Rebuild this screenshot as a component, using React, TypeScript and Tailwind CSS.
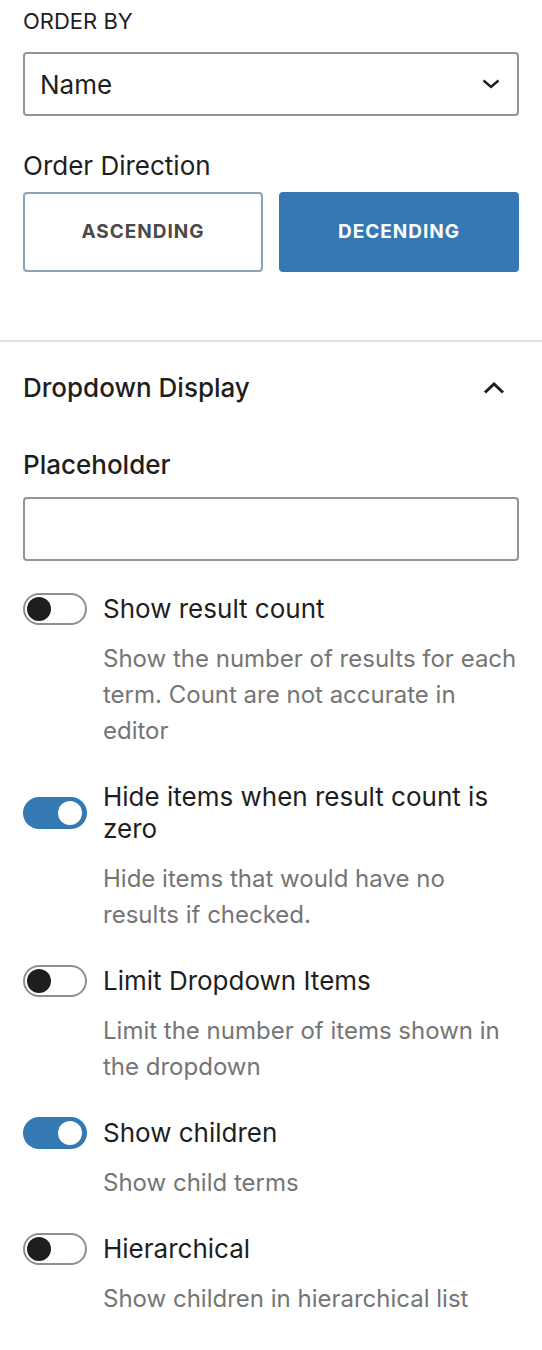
import React from 'react';

interface ToggleRowProps {
  label: string;
  help: string;
  checked: boolean;
}

function Toggle({ checked }: { checked: boolean }) {
  if (checked) {
    return (
      <span className="relative flex h-[32px] w-[64px] shrink-0 items-center rounded-full bg-[#3579b4]">
        <span className="absolute right-[5px] h-[24px] w-[24px] rounded-full bg-white" />
      </span>
    );
  }
  return (
    <span className="relative flex h-[32px] w-[64px] shrink-0 items-center rounded-full border-2 border-[#8f8f8f] bg-white">
      <span className="absolute left-[2px] h-[24px] w-[24px] rounded-full bg-[#1e1e1e]" />
    </span>
  );
}

function ToggleRow({ label, help, checked }: ToggleRowProps) {
  return (
    <div>
      <div className="flex items-center gap-[16px]">
        <Toggle checked={checked} />
        <span className="text-[26px] leading-[32px] text-[#1e1e1e]">{label}</span>
      </div>
      <p className="mt-[16px] pl-[80px] text-[24px] leading-[36px] text-[#757575]">{help}</p>
    </div>
  );
}

const toggles: ToggleRowProps[] = [
  {
    label: 'Show result count',
    help: 'Show the number of results for each term. Count are not accurate in editor',
    checked: false,
  },
  {
    label: 'Hide items when result count is zero',
    help: 'Hide items that would have no results if checked.',
    checked: true,
  },
  {
    label: 'Limit Dropdown Items',
    help: 'Limit the number of items shown in the dropdown',
    checked: false,
  },
  {
    label: 'Show children',
    help: 'Show child terms',
    checked: true,
  },
  {
    label: 'Hierarchical',
    help: 'Show children in hierarchical list',
    checked: false,
  },
];

export default function App() {
  return (
    <div className="w-[542px] min-h-[1350px] bg-white font-['Inter','Noto_Sans',sans-serif] text-[#1e1e1e]">
      <div className="px-[23px] pt-[5px] pb-[68px]">
        <h3 className="text-[22px] leading-[32px] font-normal uppercase">Order By</h3>
        <div className="mt-[15px] flex h-[64px] items-center justify-between rounded-[4px] border-2 border-[#949494] pl-[15px] pr-[17px]">
          <span className="text-[26px]">Name</span>
          <svg width="18" height="10" viewBox="0 0 18 10" fill="none">
            <path d="M1.5 1.5 L9 8 L16.5 1.5" stroke="#1e1e1e" strokeWidth="2.4" />
          </svg>
        </div>
        <div className="mt-[32px] text-[26px] leading-[36px]">Order Direction</div>
        <div className="mt-[8px] grid grid-cols-2 gap-[16px]">
          <button className="h-[80px] rounded-[4px] border-2 border-[#8aa3bd] bg-white text-[19px] font-bold tracking-[1px] text-[#4a4a4a]">
            ASCENDING
          </button>
          <button className="h-[80px] rounded-[4px] bg-[#3579b4] text-[19px] font-bold tracking-[1px] text-white">
            DECENDING
          </button>
        </div>
      </div>

      <div className="border-t-2 border-[#e0e0e0] px-[23px] pt-[28px] pb-[32px]">
        <div className="flex items-center justify-between">
          <h2 className="text-[26px] leading-[36px] font-medium">Dropdown Display</h2>
          <svg width="22" height="12" viewBox="0 0 22 12" fill="none" className="mr-[14px]">
            <path d="M2 10.5 L11 2 L20 10.5" stroke="#1e1e1e" strokeWidth="3" />
          </svg>
        </div>
        <div className="mt-[41px] text-[26px] leading-[36px] font-medium">Placeholder</div>
        <div className="mt-[14px] h-[64px] rounded-[4px] border-2 border-[#949494]" />
        <div className="mt-[32px] flex flex-col gap-[32px]">
          {toggles.map((t) => (
            <ToggleRow key={t.label} label={t.label} help={t.help} checked={t.checked} />
          ))}
        </div>
      </div>
    </div>
  );
}
